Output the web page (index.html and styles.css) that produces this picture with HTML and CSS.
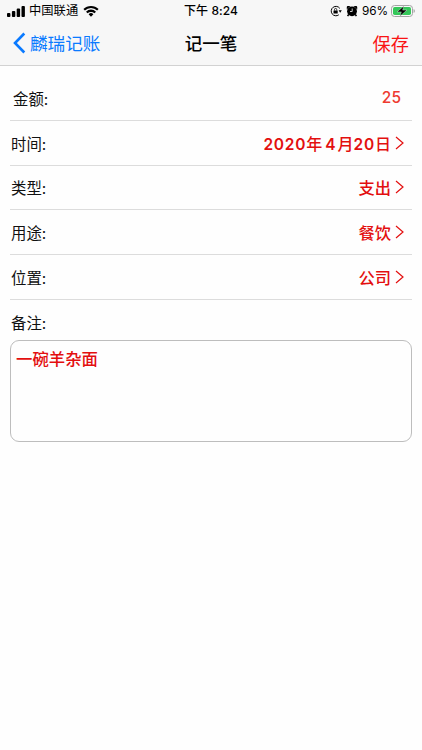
FILE: index.html
```html
<!DOCTYPE html>
<html lang="zh-CN">
<head>
    <meta charset="UTF-8">
    <meta name="viewport" content="width=device-width, initial-scale=1.0">
    <title>记一笔</title>
    <link rel="stylesheet" href="styles.css">
</head>
<body>

    <header class="top">
        <div class="status-bar">
            <div class="status-left">
                <svg class="signal" viewBox="0 0 18 11">
                    <rect x="0" y="7" width="3.4" height="4" rx="0.9"/>
                    <rect x="4.9" y="5" width="3.4" height="6" rx="0.9"/>
                    <rect x="9.7" y="2.5" width="3.4" height="8.5" rx="0.9"/>
                    <rect x="14.5" y="0" width="3.4" height="11" rx="0.9"/>
                </svg>
                <span class="carrier">中国联通</span>
                <svg class="wifi" viewBox="0 0 16 12">
                    <path d="M0.4 4.1 A10.7 10.7 0 0 1 15.6 4.1 L14.1 5.6 A8.6 8.6 0 0 0 1.9 5.6 Z"/>
                    <path d="M3 6.7 A7 7 0 0 1 13 6.7 L11.4 8.3 A4.8 4.8 0 0 0 4.6 8.3 Z"/>
                    <path d="M5.6 9.3 A3.4 3.4 0 0 1 10.4 9.3 L8 11.7 Z"/>
                </svg>
            </div>
            <div class="status-time"><span>下午</span> 8:24</div>
            <div class="status-right">
                <svg class="lock" viewBox="0 0 12 12">
                    <path d="M9.8 3.4 A4.7 4.7 0 1 0 8.8 9.8" fill="none" stroke="#000" stroke-width="1"/>
                    <path d="M8.6 5.3 H11.8 L10.2 7.8 Z"/>
                    <rect x="3.5" y="5.4" width="4.2" height="3.2" rx="0.4"/>
                    <path d="M4.5 5.5 V4.5 A1.1 1.1 0 0 1 6.7 4.5 V5.5" fill="none" stroke="#000" stroke-width="0.8"/>
                </svg>
                <svg class="alarm" viewBox="0 0 12 12">
                    <circle cx="6" cy="6.3" r="4.9"/>
                    <path d="M0.8 4.6 V2 Q0.8 0.9 1.9 0.9 H4.4 Z M11.2 4.6 V2 Q11.2 0.9 10.1 0.9 H7.6 Z"/>
                    <path d="M2.7 9.3 L1.6 11.2 M9.3 9.3 L10.4 11.2" stroke="#000" stroke-width="1.5"/>
                    <path d="M6.2 3.5 V6.5 H4" fill="none" stroke="#f7f7f7" stroke-width="0.8"/>
                </svg>
                <span class="percent">96%</span>
                <svg class="battery" viewBox="0 0 24 12">
                    <rect x="0.5" y="0.5" width="21" height="11" rx="3" fill="none" stroke="#a3a3a3"/>
                    <rect x="2" y="2" width="18" height="8" rx="1.7" fill="#34c759"/>
                    <path d="M22.6 4 A2.2 2.2 0 0 1 22.6 8 Z" fill="#a3a3a3"/>
                    <path d="M12.9 1 L6 6.9 H10.3 L8.9 11.2 L16 5.1 H11.7 Z" stroke="#e9f8ec" stroke-width="0.4"/>
                </svg>
            </div>
        </div>
        <nav class="nav-bar">
            <a class="nav-back">
                <svg class="back-arrow" viewBox="0 0 13 22">
                    <path d="M11.3 1.5 L2 11 L11.3 20.5"/>
                </svg>
                <span>麟瑞记账</span>
            </a>
            <h1 class="nav-title">记一笔</h1>
            <a class="nav-save">保存</a>
        </nav>
    </header>

    <main class="form">
        <div class="row row-amount">
            <span class="label">金额:</span>
            <span class="amount">25</span>
        </div>
        <div class="row">
            <span class="label">时间:</span>
            <span class="value date"><b>2020</b>年<b class="month">4</b>月<b>20</b>日</span>
            <svg class="arrow" viewBox="0 0 9 14"><path d="M1 1 L8 7 L1 13"/></svg>
        </div>
        <div class="row">
            <span class="label">类型:</span>
            <span class="value">支出</span>
            <svg class="arrow" viewBox="0 0 9 14"><path d="M1 1 L8 7 L1 13"/></svg>
        </div>
        <div class="row">
            <span class="label">用途:</span>
            <span class="value">餐饮</span>
            <svg class="arrow" viewBox="0 0 9 14"><path d="M1 1 L8 7 L1 13"/></svg>
        </div>
        <div class="row">
            <span class="label">位置:</span>
            <span class="value">公司</span>
            <svg class="arrow" viewBox="0 0 9 14"><path d="M1 1 L8 7 L1 13"/></svg>
        </div>
        <div class="row row-note">
            <span class="label">备注:</span>
        </div>
        <div class="note">一碗羊杂面</div>
    </main>

</body>
</html>
```
FILE: styles.css
```css
* {
    box-sizing: border-box;
}
body {
    margin: 0;
    height: 100vh;
    background: #fefefe;
    color: #111;
    font-family: Inter, "Noto Sans CJK SC", sans-serif;
    overflow: hidden;
}
svg {
    display: block;
    flex: none;
}

/* Header */
.top {
    height: 66px;
    background: #f7f7f7;
    border-bottom: 1px solid #d2d2d2;
}
.status-bar {
    display: grid;
    grid-template-columns: 1fr auto 1fr;
    align-items: center;
    height: 22px;
    padding: 0 7px;
    font-size: 12px;
    line-height: 22px;
    color: #000;
}
.status-left,
.status-right {
    display: flex;
    align-items: center;
}
.status-right {
    justify-content: flex-end;
}
.signal {
    width: 18px;
    height: 11px;
    margin-right: 4px;
}
.carrier {
    font-size: 12.3px;
}
.wifi {
    width: 16px;
    height: 12px;
    margin-left: 5px;
}
.status-time {
    font-weight: 500;
    letter-spacing: 0.1px;
}
.lock {
    width: 12px;
    height: 12px;
    margin-right: 4px;
}
.alarm {
    width: 12px;
    height: 12px;
    margin-right: 4px;
}
.percent {
    margin-right: 3px;
    font-size: 11.8px;
    letter-spacing: -0.1px;
}
.battery {
    width: 24px;
    height: 12px;
}
.nav-bar {
    display: grid;
    grid-template-columns: 1fr auto 1fr;
    align-items: center;
    height: 41px;
    padding: 0 13px;
    font-size: 17.6px;
}
.nav-back {
    display: flex;
    align-items: center;
    gap: 4px;
    color: #0a7aff;
}
.back-arrow {
    width: 13px;
    height: 22px;
    fill: none;
    stroke: #0a7aff;
    stroke-width: 2.6;
}
.nav-title {
    margin: 0;
    font-size: 17.5px;
    font-weight: 500;
    color: #000;
}
.nav-save {
    justify-self: end;
    font-size: 18.2px;
    color: #f91414;
}

/* Form rows */
.form {
    padding: 10px 10px 0;
}
.row {
    display: flex;
    align-items: center;
    height: 44.75px;
    padding: 0 8px 0 1px;
    border-bottom: 1px solid #dcdcdc;
}
.row-amount {
    padding: 0 11px 0 3px;
}
.row-note {
    height: 40px;
    padding-top: 4px;
    border-bottom: none;
}
.label {
    margin-right: auto;
    font-size: 15.4px;
}
.amount {
    font-size: 15.5px;
    font-weight: 500;
    color: #ee3a30;
}
.value {
    margin-right: 4px;
    font-size: 16.3px;
    font-weight: 500;
    color: #e30f0f;
}
.date {
    font-size: 16px;
}
.date b {
    font-weight: 600;
    font-size: 15.5px;
    letter-spacing: 0.8px;
}
.date .month {
    margin: 0 1px 0 3px;
}
.arrow {
    width: 9px;
    height: 14px;
    fill: none;
    stroke: #e30f0f;
    stroke-width: 1.2;
}
.note {
    height: 102px;
    padding: 6px 4px 6px 5px;
    border: 1px solid #bdbdbd;
    border-radius: 9px;
    font-size: 16.4px;
    font-weight: 500;
    line-height: 24px;
    color: #e30f0f;
}
```
